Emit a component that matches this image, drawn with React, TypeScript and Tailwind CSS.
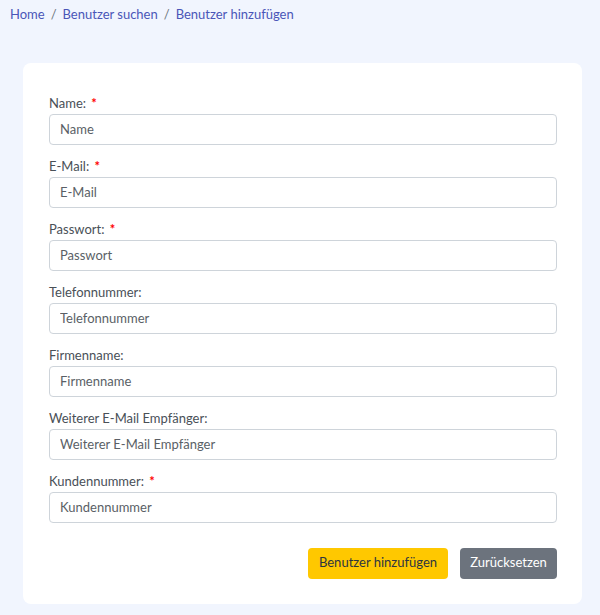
import React from "react";

const FIELDS: { label: string; required: boolean; type?: string }[] = [
  { label: "Name", required: true },
  { label: "E-Mail", required: true, type: "email" },
  { label: "Passwort", required: true, type: "password" },
  { label: "Telefonnummer", required: false },
  { label: "Firmenname", required: false },
  { label: "Weiterer E-Mail Empfänger", required: false },
  { label: "Kundennummer", required: true },
];

export default function App() {
  return (
    <div
      className="min-h-[615px] bg-[#f1f5fe] pl-[23px] pr-[18px] pb-[11px] text-[13px]"
      style={{ fontFamily: 'Lato, "Open Sans", sans-serif' }}
    >
      <nav className="-ml-[13px] flex items-center gap-[6px] pt-[5px] leading-[18px] text-[#4a55b8]">
        <a href="#">Home</a>
        <span className="text-[#6c757d]">/</span>
        <a href="#">Benutzer suchen</a>
        <span className="text-[#6c757d]">/</span>
        <span>Benutzer hinzufügen</span>
      </nav>

      <div className="mt-[40px] rounded-lg bg-white pl-[26px] pr-[25px] pt-[31px] pb-[25px]">
        <form className="flex flex-col">
          {FIELDS.map((f) => (
            <div key={f.label} className="mb-3 flex flex-col">
              <label className="mb-[2px] leading-[18px] text-[#495057]">
                {f.label}:{" "}
                {f.required && <span className="ml-[2px] font-bold text-[#ff0000]">*</span>}
              </label>
              <input
                type={f.type ?? "text"}
                placeholder={f.label}
                className="h-[31px] rounded border border-[#ced4da] px-[10px] pb-[2px] text-[13px] text-[#495057] outline-none placeholder:text-[#5a5f66]"
              />
            </div>
          ))}
          <div className="mt-[13px] flex justify-end gap-3">
            <button
              type="button"
              className="h-[31px] w-[140px] rounded bg-[#ffc800] pb-[1px] text-[13px] text-[#2d3540]"
            >
              Benutzer hinzufügen
            </button>
            <button
              type="button"
              className="h-[31px] w-[97px] rounded bg-[#6c737d] pb-[1px] text-[13px] text-white"
            >
              Zurücksetzen
            </button>
          </div>
        </form>
      </div>
    </div>
  );
}
